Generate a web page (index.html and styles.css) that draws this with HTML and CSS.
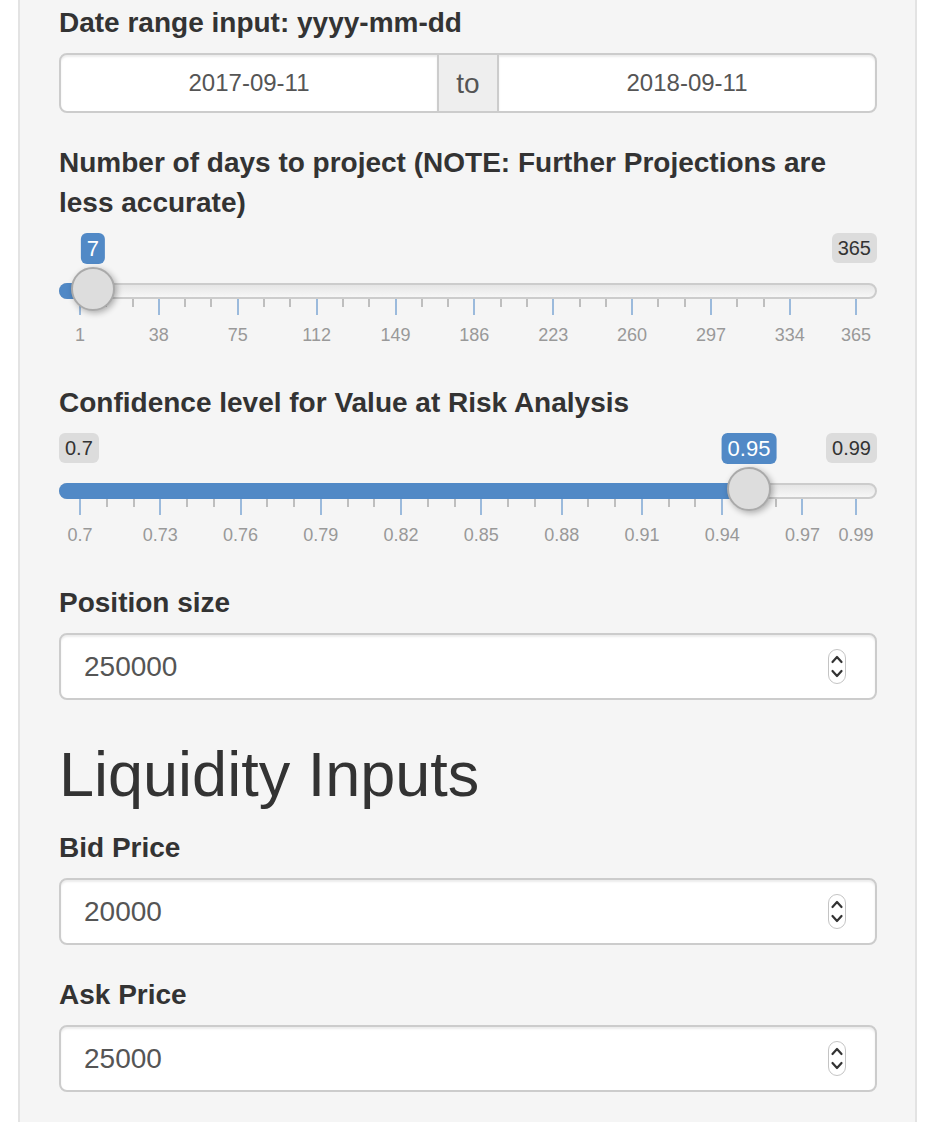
FILE: index.html
```html
<!DOCTYPE html>
<html>
<head>
<meta charset="utf-8">
<link rel="stylesheet" href="styles.css">
</head>
<body>
<div class="well">
  <div class="form-group">
    <label class="control-label">Date range input: yyyy-mm-dd</label>
    <div class="daterange">
      <div class="date date-left">2017-09-11</div>
      <div class="addon">to</div>
      <div class="date date-right">2018-09-11</div>
    </div>
  </div>

  <div class="form-group">
    <label class="control-label">Number of days to project (NOTE: Further Projections are less accurate)</label>
    <div class="irs">
      <span class="irs-max">365</span>
      <span class="irs-single" style="left:33.8px">7</span>
      <span class="irs-line"></span>
      <span class="irs-bar" style="width:33.8px"></span>
      <span class="tick" style="left:21px"></span>
      <span class="tick small" style="left:47.29px"></span>
      <span class="tick small" style="left:73.59px"></span>
      <span class="tick" style="left:99.88px"></span>
      <span class="tick small" style="left:126.17px"></span>
      <span class="tick small" style="left:152.47px"></span>
      <span class="tick" style="left:178.75px"></span>
      <span class="tick small" style="left:205.04px"></span>
      <span class="tick small" style="left:231.34px"></span>
      <span class="tick" style="left:257.63px"></span>
      <span class="tick small" style="left:283.92px"></span>
      <span class="tick small" style="left:310.22px"></span>
      <span class="tick" style="left:336.51px"></span>
      <span class="tick small" style="left:362.8px"></span>
      <span class="tick small" style="left:389.1px"></span>
      <span class="tick" style="left:415.38px"></span>
      <span class="tick small" style="left:441.67px"></span>
      <span class="tick small" style="left:467.97px"></span>
      <span class="tick" style="left:494.26px"></span>
      <span class="tick small" style="left:520.55px"></span>
      <span class="tick small" style="left:546.85px"></span>
      <span class="tick" style="left:573.14px"></span>
      <span class="tick small" style="left:599.43px"></span>
      <span class="tick small" style="left:625.73px"></span>
      <span class="tick" style="left:652.02px"></span>
      <span class="tick small" style="left:678.31px"></span>
      <span class="tick small" style="left:704.61px"></span>
      <span class="tick" style="left:730.89px"></span>
      <span class="tick" style="left:797px"></span>
      <span class="gt" style="left:21px">1</span>
      <span class="gt" style="left:99.88px">38</span>
      <span class="gt" style="left:178.75px">75</span>
      <span class="gt" style="left:257.63px">112</span>
      <span class="gt" style="left:336.51px">149</span>
      <span class="gt" style="left:415.38px">186</span>
      <span class="gt" style="left:494.26px">223</span>
      <span class="gt" style="left:573.14px">260</span>
      <span class="gt" style="left:652.02px">297</span>
      <span class="gt" style="left:730.89px">334</span>
      <span class="gt" style="left:797px">365</span>
      <span class="irs-handle" style="left:33.8px"></span>
    </div>
  </div>

  <div class="form-group">
    <label class="control-label">Confidence level for Value at Risk Analysis</label>
    <div class="irs">
      <span class="irs-min">0.7</span>
      <span class="irs-max">0.99</span>
      <span class="irs-single" style="left:690px">0.95</span>
      <span class="irs-line"></span>
      <span class="irs-bar" style="width:690px"></span>
      <span class="tick" style="left:21px"></span>
      <span class="tick small" style="left:47.76px"></span>
      <span class="tick small" style="left:74.52px"></span>
      <span class="tick" style="left:101.28px"></span>
      <span class="tick small" style="left:128.04px"></span>
      <span class="tick small" style="left:154.8px"></span>
      <span class="tick" style="left:181.55px"></span>
      <span class="tick small" style="left:208.31px"></span>
      <span class="tick small" style="left:235.07px"></span>
      <span class="tick" style="left:261.83px"></span>
      <span class="tick small" style="left:288.59px"></span>
      <span class="tick small" style="left:315.35px"></span>
      <span class="tick" style="left:342.1px"></span>
      <span class="tick small" style="left:368.86px"></span>
      <span class="tick small" style="left:395.62px"></span>
      <span class="tick" style="left:422.38px"></span>
      <span class="tick small" style="left:449.14px"></span>
      <span class="tick small" style="left:475.9px"></span>
      <span class="tick" style="left:502.66px"></span>
      <span class="tick small" style="left:529.42px"></span>
      <span class="tick small" style="left:556.18px"></span>
      <span class="tick" style="left:582.93px"></span>
      <span class="tick small" style="left:609.69px"></span>
      <span class="tick small" style="left:636.45px"></span>
      <span class="tick" style="left:663.21px"></span>
      <span class="tick small" style="left:689.97px"></span>
      <span class="tick small" style="left:716.73px"></span>
      <span class="tick" style="left:743.48px"></span>
      <span class="tick" style="left:797px"></span>
      <span class="gt" style="left:21px">0.7</span>
      <span class="gt" style="left:101.28px">0.73</span>
      <span class="gt" style="left:181.55px">0.76</span>
      <span class="gt" style="left:261.83px">0.79</span>
      <span class="gt" style="left:342.1px">0.82</span>
      <span class="gt" style="left:422.38px">0.85</span>
      <span class="gt" style="left:502.66px">0.88</span>
      <span class="gt" style="left:582.93px">0.91</span>
      <span class="gt" style="left:663.21px">0.94</span>
      <span class="gt" style="left:743.48px">0.97</span>
      <span class="gt" style="left:797px">0.99</span>
      <span class="irs-handle" style="left:690px"></span>
    </div>
  </div>

  <div class="form-group">
    <label class="control-label">Position size</label>
    <div class="num-input">
      <span class="num-value">250000</span>
      <svg class="spinner" width="18" height="35" viewBox="0 0 18 35"><rect x="0.5" y="0.5" width="17" height="34" rx="8.5" fill="#fff" stroke="#c4c4c4"/><path d="M4.5 13 L9 8 L13.5 13" fill="none" stroke="#333" stroke-width="2.2" stroke-linecap="round" stroke-linejoin="round"/><path d="M4.5 22 L9 27 L13.5 22" fill="none" stroke="#333" stroke-width="2.2" stroke-linecap="round" stroke-linejoin="round"/></svg>
    </div>
  </div>

  <h2 class="section-title">Liquidity Inputs</h2>

  <div class="form-group">
    <label class="control-label">Bid Price</label>
    <div class="num-input">
      <span class="num-value">20000</span>
      <svg class="spinner" width="18" height="35" viewBox="0 0 18 35"><rect x="0.5" y="0.5" width="17" height="34" rx="8.5" fill="#fff" stroke="#c4c4c4"/><path d="M4.5 13 L9 8 L13.5 13" fill="none" stroke="#333" stroke-width="2.2" stroke-linecap="round" stroke-linejoin="round"/><path d="M4.5 22 L9 27 L13.5 22" fill="none" stroke="#333" stroke-width="2.2" stroke-linecap="round" stroke-linejoin="round"/></svg>
    </div>
  </div>

  <div class="form-group">
    <label class="control-label">Ask Price</label>
    <div class="num-input">
      <span class="num-value">25000</span>
      <svg class="spinner" width="18" height="35" viewBox="0 0 18 35"><rect x="0.5" y="0.5" width="17" height="34" rx="8.5" fill="#fff" stroke="#c4c4c4"/><path d="M4.5 13 L9 8 L13.5 13" fill="none" stroke="#333" stroke-width="2.2" stroke-linecap="round" stroke-linejoin="round"/><path d="M4.5 22 L9 27 L13.5 22" fill="none" stroke="#333" stroke-width="2.2" stroke-linecap="round" stroke-linejoin="round"/></svg>
    </div>
  </div>
</div>
</body>
</html>
```

FILE: styles.css
```css
html, body {
  margin: 0;
  padding: 0;
  background: #ffffff;
}

body {
  font-family: "Liberation Sans", Arial, Helvetica, sans-serif;
  color: #333333;
}

.well {
  margin-left: 18px;
  width: 899px;
  box-sizing: border-box;
  background: #f5f5f5;
  border: 2px solid #e3e3e3;
  border-top: none;
  border-bottom: none;
  padding: 3px 38px 38px 39px;
}

.form-group {
  margin-bottom: 30px;
}

.control-label {
  display: block;
  font-weight: bold;
  font-size: 28px;
  line-height: 40px;
  margin-bottom: 10px;
}

/* date range */
.daterange {
  display: flex;
  height: 60px;
}

.date {
  flex: 1;
  box-sizing: border-box;
  background: #fff;
  border: 2px solid #cccccc;
  box-shadow: inset 0 2px 2px rgba(0, 0, 0, 0.075);
  font-size: 24px;
  color: #555555;
  display: flex;
  align-items: center;
  justify-content: center;
}

.date-left {
  border-radius: 8px 0 0 8px;
}

.date-right {
  border-radius: 0 8px 8px 0;
}

.addon {
  width: 58px;
  flex: none;
  box-sizing: border-box;
  background: #eeeeee;
  border-top: 2px solid #cccccc;
  border-bottom: 2px solid #cccccc;
  font-size: 28px;
  color: #555555;
  display: flex;
  align-items: center;
  justify-content: center;
  padding-top: 2px;
}

/* slider */
.irs {
  position: relative;
  height: 120px;
}

.irs-min,
.irs-max {
  position: absolute;
  top: 0;
  font-size: 20px;
  line-height: 26px;
  padding: 2px 6px;
  border-radius: 6px;
  background: rgba(0, 0, 0, 0.1);
  color: #333333;
}

.irs-min {
  left: 0;
}

.irs-max {
  right: 0;
}

.irs-single {
  position: absolute;
  top: 0;
  transform: translateX(-50%);
  font-size: 22px;
  line-height: 27px;
  padding: 2px 6px;
  border-radius: 6px;
  background: #5189c6;
  color: #ffffff;
}

.irs-line {
  position: absolute;
  left: 0;
  right: 0;
  top: 50px;
  height: 16px;
  box-sizing: border-box;
  border: 2px solid #cccccc;
  border-radius: 16px;
  background: linear-gradient(to bottom, #dddddd -50%, #ffffff 150%);
}

.irs-bar {
  position: absolute;
  left: 0;
  top: 50px;
  height: 16px;
  background: #5189c6;
  border-radius: 8px 0 0 8px;
}

.irs-handle {
  position: absolute;
  top: 34px;
  width: 44px;
  height: 44px;
  margin-left: -22px;
  box-sizing: border-box;
  border: 2px solid #aaaaaa;
  background: #dddddd;
  border-radius: 50%;
  box-shadow: 2px 2px 6px rgba(0, 0, 0, 0.3);
}

.tick {
  position: absolute;
  top: 66px;
  width: 2px;
  height: 16px;
  margin-left: -1px;
  background: rgba(81, 137, 198, 0.55);
}

.tick.small {
  height: 8px;
  background: rgba(153, 153, 153, 0.6);
}

.gt {
  position: absolute;
  top: 93px;
  font-size: 18px;
  line-height: 18px;
  color: #999999;
  transform: translateX(-50%);
  white-space: nowrap;
}

/* number inputs */
.num-input {
  height: 67px;
  box-sizing: border-box;
  background: #ffffff;
  border: 2px solid #cccccc;
  border-radius: 8px;
  box-shadow: inset 0 2px 2px rgba(0, 0, 0, 0.075);
  display: flex;
  align-items: center;
  padding: 0 29px 0 23px;
}

.num-value {
  font-size: 28px;
  color: #555555;
}

.spinner {
  margin-left: auto;
  display: block;
}

.section-title {
  font-size: 63px;
  font-weight: normal;
  line-height: 66px;
  margin: 41px 0 21px;
  color: #333333;
}
```
